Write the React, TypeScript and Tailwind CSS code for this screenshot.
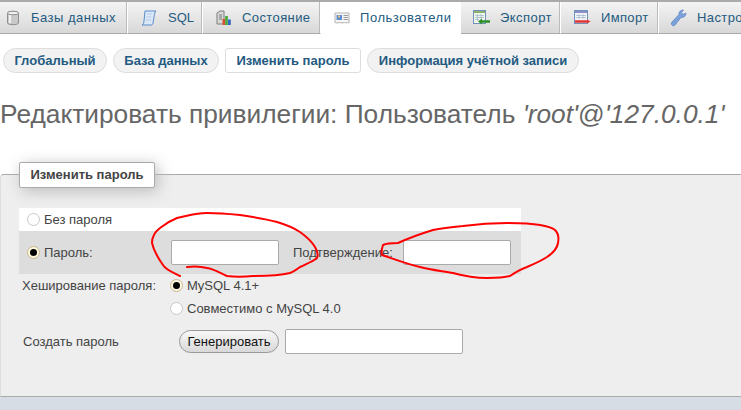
const Cyl = () => (
  <svg width="14" height="16" viewBox="0 0 14 16">
    <path d="M1.5 3C1.5 0.8 12.5 0.8 12.5 3V13C12.5 15.2 1.5 15.2 1.5 13Z" fill="#c9c9c9" stroke="#8f8f8f" />
    <path d="M4 4.5V13" stroke="#f2f2f2" strokeWidth="2" />
    <ellipse cx="7" cy="3" rx="5.5" ry="1.8" fill="#f0f0f0" stroke="#8f8f8f" />
  </svg>
);
const Sql = () => (
  <svg width="16" height="16" viewBox="0 0 16 16">
    <path d="M4 1H15C13.8 2 13.6 3.5 13.2 6L12 13C11.8 14.5 11 15 10 15H1C2.3 14.5 2.7 13.5 3 11Z" fill="#dbe8f8" stroke="#5b8ccc" />
    <path d="M6 4H11M5.5 7H10.5M5 10H10" stroke="#b4cbe8" />
  </svg>
);
const Status = () => (
  <svg width="16" height="16" viewBox="0 0 16 16">
    <path d="M1 3L4 1H8V14H1Z" fill="#d9d9d9" stroke="#7a7a7a" />
    <path d="M3 5H6M3 7H6M3 9H6" stroke="#777" />
    <rect x="6.5" y="9" width="2.6" height="6" fill="#d8502f" />
    <rect x="9.2" y="6" width="2.6" height="9" fill="#45a83a" />
    <rect x="12" y="9.5" width="2.8" height="5.5" fill="#3768c9" />
  </svg>
);
const Users = () => (
  <svg width="16" height="16" viewBox="0 0 16 16">
    <path d="M1 3H15V13L13.5 12.5L12 13L10.5 12.5L8 13L5.5 12.5L3 13L1 12.5Z" fill="#f6f6f6" stroke="#b3b3b3" />
    <rect x="2.5" y="5" width="5.5" height="5" fill="#5f8fd0" />
    <rect x="4" y="5.5" width="2" height="2" fill="#e8c07a" />
    <path d="M9.5 5.5H14M9.5 7.5H14M9.5 9.5H14" stroke="#9a9a9a" />
  </svg>
);
const Export = () => (
  <svg width="17" height="16" viewBox="0 0 17 16">
    <rect x="0.5" y="0.5" width="12" height="13" fill="#f1f6e9" stroke="#6f93bb" />
    <rect x="1" y="1" width="11" height="2" fill="#8db06b" />
    <path d="M2 5.5H11M2 7.5H11M2 9.5H6M4.5 4V11M8 4V9" stroke="#a5bccf" strokeWidth="0.8" />
    <path d="M17 11.5H8" stroke="#2c8f2c" strokeWidth="2.5" />
    <path d="M5 11.5L9 8.5V14.5Z" fill="#2c8f2c" />
  </svg>
);
const Import = () => (
  <svg width="17" height="16" viewBox="0 0 17 16">
    <rect x="0.5" y="0.5" width="13" height="13" fill="#f5f3fa" stroke="#6f93bb" />
    <rect x="1" y="1" width="12" height="2" fill="#8a8fc9" />
    <path d="M2 5.5H12M2 7.5H12M5 4V9M9 4V9" stroke="#a5bccf" strokeWidth="0.8" />
    <path d="M1 11.5H13" stroke="#e03434" strokeWidth="2.5" />
    <path d="M13 9.5L16.5 11.5L13 13.5Z" fill="#e03434" />
  </svg>
);
const Wrench = () => (
  <svg width="17" height="18" viewBox="0 0 16 18">
    <path d="M2 16.5C0.5 15.5 0.5 14 1.5 13L8.5 5.5C8 3 10 1 13 1L11 3.5L12.5 5.5L15.5 4C15.5 7 13 9 10.5 8.5L4.5 16C3.5 17 3 17 2 16.5Z" fill="#7ba2dc" stroke="#5a80bb" strokeWidth="0.7" />
  </svg>
);

const tabs = [
  { label: "Базы данных", icon: <Cyl />, w: "w-[128px]", pl: "pl-[6px]", gap: "gap-[11px]", tr: "tracking-[0.5px]" },
  { label: "SQL", icon: <Sql />, w: "w-[75px]", pl: "pl-[13px]", gap: "gap-[11px]", tr: "tracking-[0px]" },
  { label: "Состояние", icon: <Status />, w: "w-[118px]", pl: "pl-[13px]", gap: "gap-[10px]", tr: "tracking-[0.4px]" },
  { label: "Пользователи", icon: <Users />, w: "w-[140px]", pl: "pl-[13px]", gap: "gap-[10px]", tr: "tracking-[0.55px]", active: true },
  { label: "Экспорт", icon: <Export />, w: "w-[100px]", pl: "pl-[12px]", gap: "gap-[10px]", tr: "tracking-[0.45px]" },
  { label: "Импорт", icon: <Import />, w: "w-[98px]", pl: "pl-[13px]", gap: "gap-[10px]", tr: "tracking-[0.35px]" },
  { label: "Настройки", icon: <Wrench />, w: "w-[120px]", pl: "pl-[11px]", gap: "gap-[10px]", tr: "tracking-[0.4px]" },
];

const Radio = ({ on }: { on?: boolean }) => (
  <span className={`flex h-[13px] w-[13px] shrink-0 items-center justify-center rounded-full border ${on ? "border-[#c9b98f] bg-[#fff6df]" : "border-[#c8c8c8] bg-white"}`}>
    {on && <span className="h-[7px] w-[7px] rounded-full bg-black" />}
  </span>
);

const Field = ({ w }: { w: string }) => (
  <input className={`${w} h-[25px] rounded-[2px] border border-[#aaa] bg-white`} />
);

export default function App() {
  return (
    <div className="relative h-[410px] w-[741px] overflow-hidden bg-white font-['Liberation_Sans',Arial,sans-serif] text-[13px] text-[#444]">
      <div className="flex h-[34px] overflow-hidden border-t-2 border-[#aaa]">
        {tabs.map((t) => (
          <div
            key={t.label}
            className={`flex h-[32px] shrink-0 items-center whitespace-nowrap text-[13px] text-[#235a81] ${t.w} ${t.pl} ${t.gap} ${
              t.active
                ? "bg-white"
                : "border-r border-b border-r-white border-b-[#aaa] bg-gradient-to-b from-[#f4f4f4] to-[#d8d8d8] shadow-[inset_-1px_0_0_#bbb]"
            }`}
          >
            {t.icon}
            <span className={t.tr}>{t.label}</span>
          </div>
        ))}
      </div>

      <div className="flex gap-[6px] pl-[3px] pt-[14px] text-[13px] font-bold text-[#235a81]">
        {["Глобальный", "База данных"].map((s, i) => (
          <span key={s} className={`flex h-[25px] items-center justify-center rounded-full border border-[#ddd] bg-[#f2f2f2] ${i === 0 ? "w-[104px]" : "w-[106px]"}`}>{s}</span>
        ))}
        <span className="flex h-[25px] w-[136px] items-center justify-center rounded-[3px] border border-[#ddd] bg-white">Изменить пароль</span>
        <span className="flex h-[25px] w-[212px] items-center justify-center rounded-full border border-[#ddd] bg-[#f2f2f2]">Информация учётной записи</span>
      </div>

      <h2 className="whitespace-nowrap pt-[25px] text-[26.3px] leading-[32px] text-[#666]">
        Редактировать привилегии: Пользователь <i>'root'</i>@<i>'127.0.0.1'</i>
      </h2>

      <div className="relative mt-[44px] h-[223px] rounded-tl-[4px] border-t border-l border-b border-[#aaa] border-l-[#ddd] bg-[#eee] pl-[18px] pt-[33px]">
        <div className="absolute left-[18px] top-[-13px] flex h-[26px] w-[136px] items-center justify-center rounded-[2px] border border-[#aaa] bg-white text-[13px] font-bold text-[#444] shadow-[3px_3px_15px_#bbb]">
          Изменить пароль
        </div>

        <div className="flex h-[23px] w-[502px] items-center gap-[4px] bg-white pl-[8px]">
          <Radio />
          <span>Без пароля</span>
        </div>
        <div className="flex h-[43px] w-[502px] items-center bg-[#ddd] pl-[8px]">
          <Radio on />
          <span className="ml-[4px] w-[127px]">Пароль:</span>
          <Field w="w-[108px]" />
          <span className="ml-[14px] w-[110px] whitespace-nowrap">Подтверждение:</span>
          <Field w="w-[108px]" />
        </div>

        <div className="flex h-[23px] items-center pl-[3px]">
          <span className="w-[148px] whitespace-nowrap">Хеширование пароля:</span>
          <Radio on />
          <span className="ml-[4px]">MySQL 4.1+</span>
        </div>
        <div className="flex h-[23px] items-center pl-[151px]">
          <Radio />
          <span className="ml-[4px]">Совместимо с MySQL 4.0</span>
        </div>
        <div className="mt-[9px] flex items-center pl-[4px]">
          <span className="w-[156px]">Создать пароль</span>
          <span className="flex h-[23px] w-[100px] items-center justify-center rounded-full border border-[#999] bg-gradient-to-b from-[#f8f8f8] to-[#d8d8d8] text-[#111]">Генерировать</span>
          <Field w="ml-[6px] w-[178px]" />
        </div>
      </div>

      <div className="h-[14px] bg-[#d6dde5]" />

      <svg className="pointer-events-none absolute left-0 top-0" width="741" height="410" fill="none" stroke="#f00" strokeWidth="2" strokeLinecap="round" strokeLinejoin="round">
        <path d="M180 276C172 272 166 270 163 265C158 258 154 252 152 243C152 236 156 231 160 228C166 223 172 220 177 218C187 216 196 213 207 213C220 213 230 214 240 215C254 217 266 219 277 222C287 225 294 228 300 232C307 237 312 242 315 247C318 252 318 256 317 258C312 262 306 264 300 267C296 270 293 272 290 273C278 276 266 276 253 276C243 277 235 277 227 276C220 273 214 269 207 268C200 266 194 266 187 267" />
        <path d="M398 243C393 243 387 243 383 245C382 248 381 252 382 255C394 259 407 264 420 267C431 270 442 271 453 273C464 276 476 278 487 278C496 278 503 278 510 276C516 272 521 269 527 267C534 264 541 261 547 257C553 253 557 249 558 243C559 238 558 233 555 230C551 227 546 226 540 225C529 223 518 223 507 223C492 223 478 224 463 226C453 227 443 228 433 230C420 234 409 238 398 243Z" />
      </svg>
    </div>
  );
}
